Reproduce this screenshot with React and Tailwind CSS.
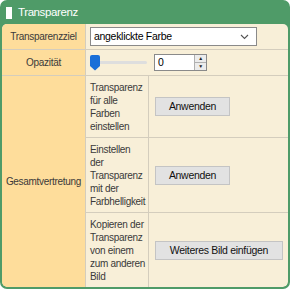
import React from 'react';

function Chevron() {
  return (
    <svg width="9" height="6" viewBox="0 0 9 6" className="text-[#555]">
      <path d="M1 1l3.5 3.5L8 1" fill="none" stroke="currentColor" strokeWidth="1.1" />
    </svg>
  );
}

function Lines({ lines }) {
  return (
    <div className="flex flex-col whitespace-nowrap">
      {lines.map((l) => (
        <span key={l}>{l}</span>
      ))}
    </div>
  );
}

export default function App() {
  const cell = 'border-[#d4cdbd]';
  const btn = 'h-[19px] bg-[#e2e2e2] border border-[#c4c4c4] text-[#111] text-[10.5px] tracking-[-0.3px]';
  return (
    <div className="w-[290px] h-[289px] bg-white font-['Liberation_Sans',sans-serif] text-[10px] tracking-[-0.3px] text-[#3a3a3a]">
      <div className="w-full h-full rounded-[7px] border-2 border-[#4f9b68] bg-[#4f9b68] overflow-hidden flex flex-col">
        {/* header */}
        <div className="h-[22px] flex items-center gap-[6px] px-[4px] text-white text-[11.5px] tracking-[-0.4px] shrink-0">
          <span className="w-[6px] h-[12px] bg-white inline-block"></span>
          <span>Transparenz</span>
        </div>

        {/* body */}
        <div className="flex-1 bg-[#f8efd8] rounded-[5px] overflow-hidden grid grid-cols-[84px_63px_1fr] grid-rows-[26px_26px_62px_75px_1fr] leading-[13px]">
          <div className={`bg-[#fedd9b] border-r border-b ${cell} flex items-center justify-center`}>Transparenzziel</div>
          <div className={`col-span-2 border-b ${cell} flex items-center pl-[4px]`}>
            <div className="w-[167px] h-[19px] bg-white border border-[#8a8a8a] flex items-center justify-between pl-[3px] pr-[7px] text-[10.5px] text-black">
              <span>angeklickte Farbe</span>
              <Chevron />
            </div>
          </div>

          <div className={`bg-[#fedd9b] border-r border-b ${cell} flex items-center justify-center`}>Opazität</div>
          <div className={`col-span-2 border-b ${cell} flex items-center pl-[4px] gap-[7px]`}>
            <div className="relative w-[57px] h-[16px] flex items-center">
              <div className="w-full h-[3px] bg-[#dedede] rounded-sm"></div>
              <div className="absolute left-0 top-0 w-[10px] h-[16px] bg-[#1a6fd8] rounded-t-[2px] [clip-path:polygon(0_0,100%_0,100%_72%,50%_100%,0_72%)]"></div>
            </div>
            <div className="w-[53px] h-[17px] bg-white border border-[#8a8a8a] flex items-center text-[10.5px] text-black">
              <span className="flex-1 pl-[3px] leading-none">0</span>
              <div className="w-[12px] h-full flex flex-col border-l border-[#b0b0b0] bg-[#ececec] text-[#222]">
                <div className="flex-1 flex items-center justify-center border-b border-[#b0b0b0] text-[5px] leading-none">▲</div>
                <div className="flex-1 flex items-center justify-center text-[5px] leading-none">▼</div>
              </div>
            </div>
          </div>

          <div className={`row-span-3 bg-[#fedd9b] border-r ${cell} flex items-center justify-center`}>Gesamtvertretung</div>

          <div className={`border-r border-b ${cell} pl-[4px] flex items-center overflow-hidden`}>
            <Lines lines={['Transparenz', 'für alle', 'Farben', 'einstellen']} />
          </div>
          <div className={`border-b ${cell} flex items-center pl-[6px]`}>
            <button className={`w-[75px] ${btn}`}>Anwenden</button>
          </div>

          <div className={`border-r border-b ${cell} pl-[4px] flex items-center overflow-hidden`}>
            <Lines lines={['Einstellen', 'der', 'Transparenz', 'mit der', 'Farbhelligkeit']} />
          </div>
          <div className={`border-b ${cell} flex items-center pl-[6px]`}>
            <button className={`w-[75px] ${btn}`}>Anwenden</button>
          </div>

          <div className={`border-r ${cell} pl-[4px] flex items-center overflow-hidden`}>
            <Lines lines={['Kopieren der', 'Transparenz', 'von einem', 'zum anderen', 'Bild']} />
          </div>
          <div className="flex items-center pl-[6px]">
            <button className={`w-[128px] ${btn}`}>Weiteres Bild einfügen</button>
          </div>
        </div>
      </div>
    </div>
  );
}
